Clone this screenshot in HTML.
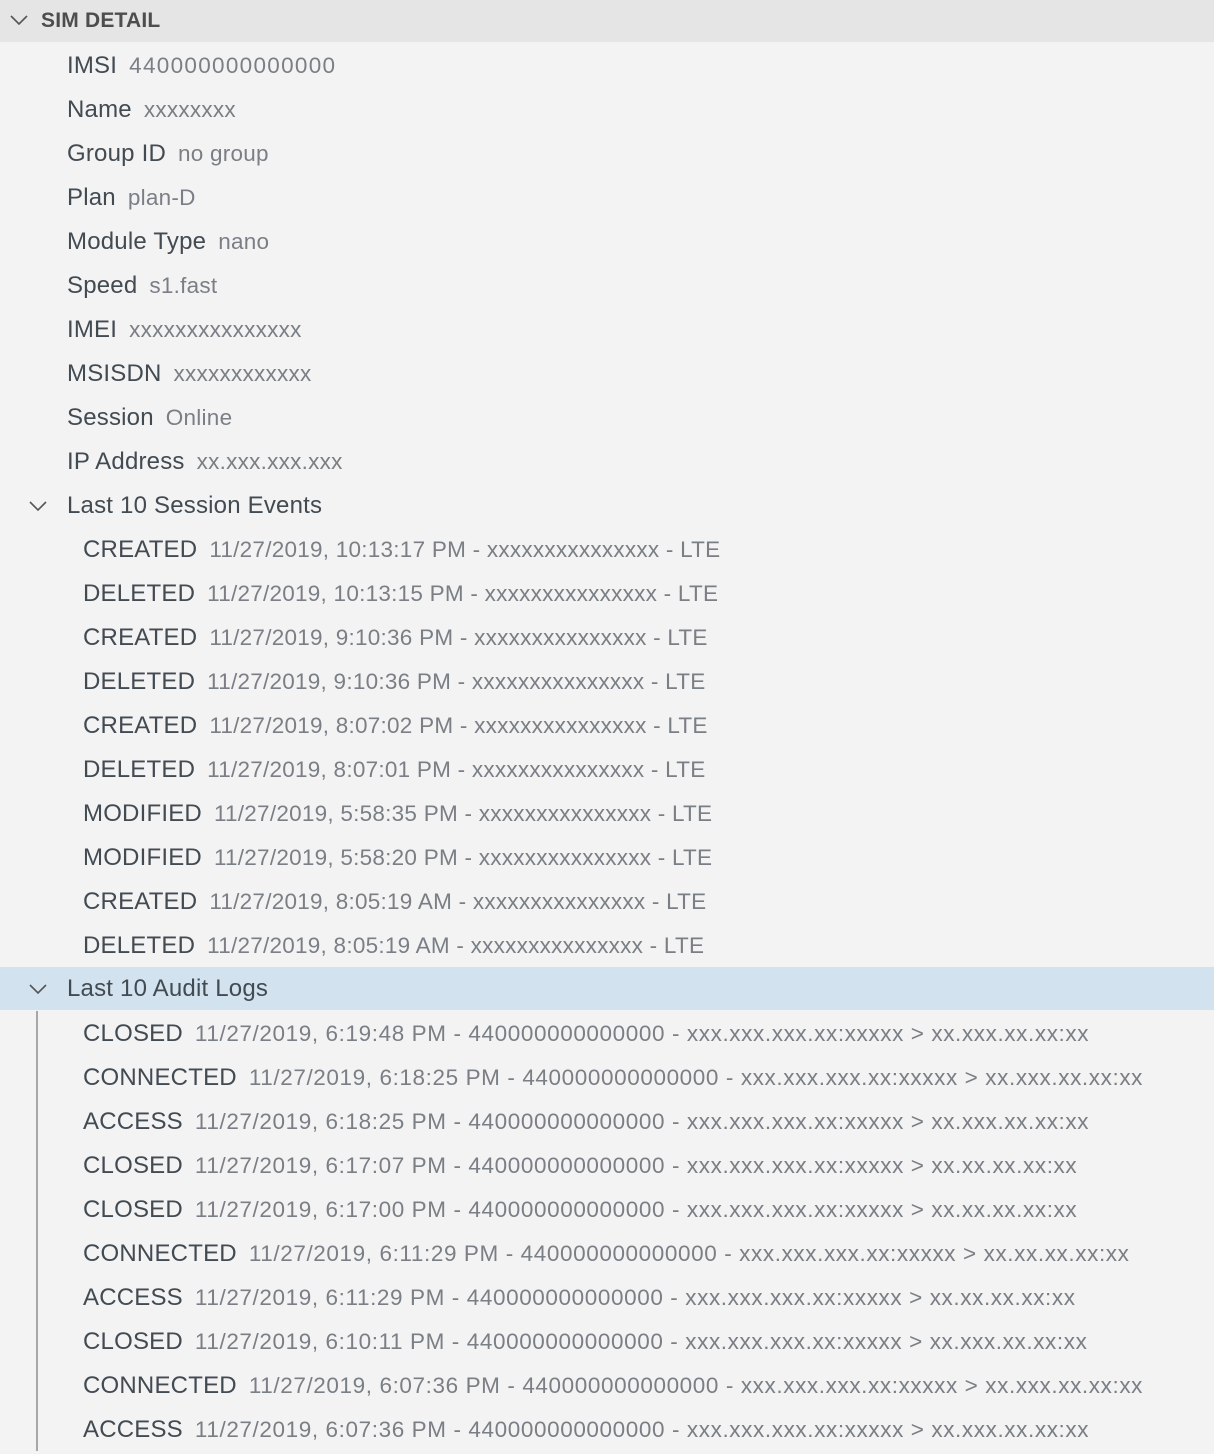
<!DOCTYPE html>
<html><head><style>
body{margin:0;width:1214px;height:1454px;background:#f3f3f3;font-family:"Liberation Sans",sans-serif;overflow:hidden;position:relative}
.hdr{height:42px;background:#e5e5e5;position:relative}
.hdr span{position:absolute;left:41px;top:9px;font-size:21px;font-weight:bold;color:#4d4d4d;letter-spacing:0.2px}
.row{position:absolute;left:0;right:0;height:44px;line-height:44px;font-size:24px;color:#424a52;white-space:nowrap}
.row b{font-weight:normal;letter-spacing:0.2px}
.row i{font-style:normal;color:#7a7f85;margin-left:12px;font-size:22.5px;letter-spacing:0.25px}
.a i{letter-spacing:0.6px}
.sel{background:#d2e2ef}
.vl{position:absolute;left:36px;top:1011px;width:2px;height:440px;background:#a7a7a7}
svg{position:absolute}
</style></head><body>
<div class="hdr"><svg style="left:9px;top:12px" width="20" height="16"><path d="M2 4 L10 12 L18 4" stroke="#555" stroke-width="1.6" fill="none"/></svg><span>SIM DETAIL</span></div>
<div class="row" style="top:44px;padding-left:67px"><b>IMSI</b><i style="letter-spacing:1.3px">440000000000000</i></div>
<div class="row" style="top:88px;padding-left:67px"><b>Name</b><i>xxxxxxxx</i></div>
<div class="row" style="top:132px;padding-left:67px"><b>Group ID</b><i>no group</i></div>
<div class="row" style="top:176px;padding-left:67px"><b>Plan</b><i>plan-D</i></div>
<div class="row" style="top:220px;padding-left:67px"><b>Module Type</b><i>nano</i></div>
<div class="row" style="top:264px;padding-left:67px"><b>Speed</b><i>s1.fast</i></div>
<div class="row" style="top:308px;padding-left:67px"><b>IMEI</b><i>xxxxxxxxxxxxxxx</i></div>
<div class="row" style="top:352px;padding-left:67px"><b>MSISDN</b><i>xxxxxxxxxxxx</i></div>
<div class="row" style="top:396px;padding-left:67px"><b>Session</b><i>Online</i></div>
<div class="row" style="top:440px;padding-left:67px"><b>IP Address</b><i>xx.xxx.xxx.xxx</i></div>
<div class="row" style="top:484px;padding-left:67px"><svg style="left:28px;top:14px" width="20" height="16"><path d="M2 4 L10 12 L18 4" stroke="#555" stroke-width="1.6" fill="none"/></svg><b>Last 10 Session Events</b></div>
<div class="row" style="top:528px;padding-left:83px"><b>CREATED</b><i>11/27/2019, 10:13:17 PM - xxxxxxxxxxxxxxx - LTE</i></div>
<div class="row" style="top:572px;padding-left:83px"><b>DELETED</b><i>11/27/2019, 10:13:15 PM - xxxxxxxxxxxxxxx - LTE</i></div>
<div class="row" style="top:616px;padding-left:83px"><b>CREATED</b><i>11/27/2019, 9:10:36 PM - xxxxxxxxxxxxxxx - LTE</i></div>
<div class="row" style="top:660px;padding-left:83px"><b>DELETED</b><i>11/27/2019, 9:10:36 PM - xxxxxxxxxxxxxxx - LTE</i></div>
<div class="row" style="top:704px;padding-left:83px"><b>CREATED</b><i>11/27/2019, 8:07:02 PM - xxxxxxxxxxxxxxx - LTE</i></div>
<div class="row" style="top:748px;padding-left:83px"><b>DELETED</b><i>11/27/2019, 8:07:01 PM - xxxxxxxxxxxxxxx - LTE</i></div>
<div class="row" style="top:792px;padding-left:83px"><b>MODIFIED</b><i>11/27/2019, 5:58:35 PM - xxxxxxxxxxxxxxx - LTE</i></div>
<div class="row" style="top:836px;padding-left:83px"><b>MODIFIED</b><i>11/27/2019, 5:58:20 PM - xxxxxxxxxxxxxxx - LTE</i></div>
<div class="row" style="top:880px;padding-left:83px"><b>CREATED</b><i>11/27/2019, 8:05:19 AM - xxxxxxxxxxxxxxx - LTE</i></div>
<div class="row" style="top:924px;padding-left:83px"><b>DELETED</b><i>11/27/2019, 8:05:19 AM - xxxxxxxxxxxxxxx - LTE</i></div>
<div class="row sel" style="top:967px;height:43px;line-height:44px;padding-left:67px"><svg style="left:28px;top:14px" width="20" height="16"><path d="M2 4 L10 12 L18 4" stroke="#555" stroke-width="1.6" fill="none"/></svg><b>Last 10 Audit Logs</b></div>
<div class="vl"></div>
<div class="row a" style="top:1012px;padding-left:83px"><b>CLOSED</b><i>11/27/2019, 6:19:48 PM - 440000000000000 - xxx.xxx.xxx.xx:xxxxx &gt; xx.xxx.xx.xx:xx</i></div>
<div class="row a" style="top:1056px;padding-left:83px"><b>CONNECTED</b><i>11/27/2019, 6:18:25 PM - 440000000000000 - xxx.xxx.xxx.xx:xxxxx &gt; xx.xxx.xx.xx:xx</i></div>
<div class="row a" style="top:1100px;padding-left:83px"><b>ACCESS</b><i>11/27/2019, 6:18:25 PM - 440000000000000 - xxx.xxx.xxx.xx:xxxxx &gt; xx.xxx.xx.xx:xx</i></div>
<div class="row a" style="top:1144px;padding-left:83px"><b>CLOSED</b><i>11/27/2019, 6:17:07 PM - 440000000000000 - xxx.xxx.xxx.xx:xxxxx &gt; xx.xx.xx.xx:xx</i></div>
<div class="row a" style="top:1188px;padding-left:83px"><b>CLOSED</b><i>11/27/2019, 6:17:00 PM - 440000000000000 - xxx.xxx.xxx.xx:xxxxx &gt; xx.xx.xx.xx:xx</i></div>
<div class="row a" style="top:1232px;padding-left:83px"><b>CONNECTED</b><i>11/27/2019, 6:11:29 PM - 440000000000000 - xxx.xxx.xxx.xx:xxxxx &gt; xx.xx.xx.xx:xx</i></div>
<div class="row a" style="top:1276px;padding-left:83px"><b>ACCESS</b><i>11/27/2019, 6:11:29 PM - 440000000000000 - xxx.xxx.xxx.xx:xxxxx &gt; xx.xx.xx.xx:xx</i></div>
<div class="row a" style="top:1320px;padding-left:83px"><b>CLOSED</b><i>11/27/2019, 6:10:11 PM - 440000000000000 - xxx.xxx.xxx.xx:xxxxx &gt; xx.xxx.xx.xx:xx</i></div>
<div class="row a" style="top:1364px;padding-left:83px"><b>CONNECTED</b><i>11/27/2019, 6:07:36 PM - 440000000000000 - xxx.xxx.xxx.xx:xxxxx &gt; xx.xxx.xx.xx:xx</i></div>
<div class="row a" style="top:1408px;padding-left:83px"><b>ACCESS</b><i>11/27/2019, 6:07:36 PM - 440000000000000 - xxx.xxx.xxx.xx:xxxxx &gt; xx.xxx.xx.xx:xx</i></div>
</body></html>
